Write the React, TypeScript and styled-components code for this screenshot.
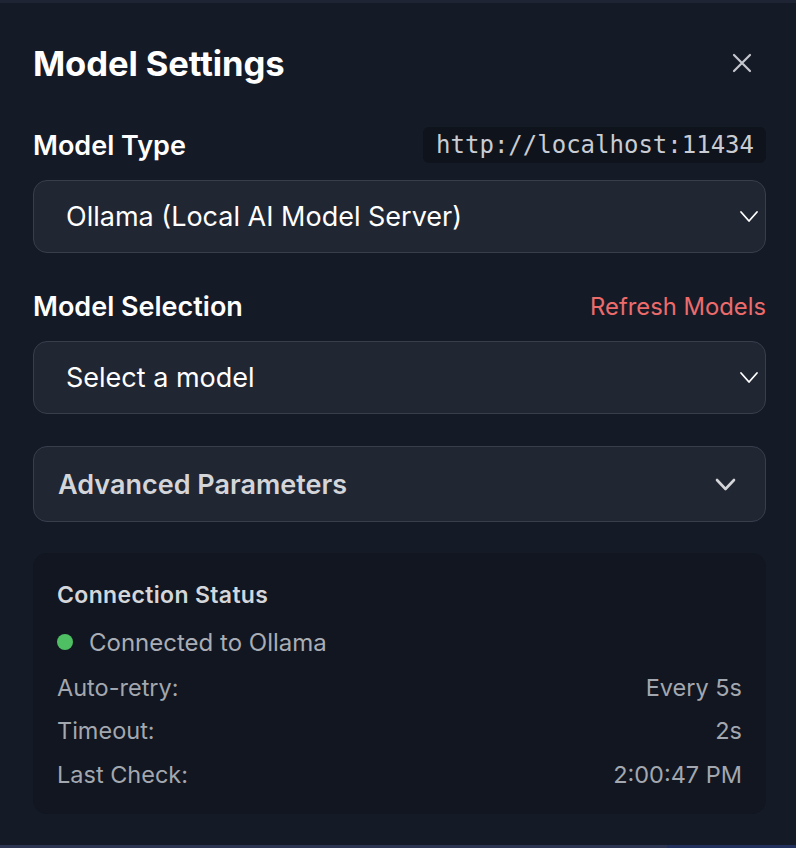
import React from "react";
import styled, { createGlobalStyle } from "styled-components";

const Global = createGlobalStyle`
  html, body { margin: 0; padding: 0; background: #151a27; }
  body { font-family: Inter, "Noto Sans", sans-serif; -webkit-font-smoothing: antialiased; }
  * { box-sizing: border-box; }
`;

const Page = styled.div`
  width: 796px;
  height: 848px;
  display: flex;
  flex-direction: column;
  background: #151a27;
  overflow: hidden;
`;

const TopStrip = styled.div`
  height: 3px;
  background: #1e2434;
  flex-shrink: 0;
`;

const Panel = styled.div`
  flex: 1;
  display: flex;
  flex-direction: column;
  padding: 0 30px 0 33px;
`;

const Header = styled.div`
  height: 126px;
  display: flex;
  align-items: center;
  justify-content: space-between;
  margin-top: -3px;
`;

const Title = styled.h1`
  margin: 0;
  font-size: 34.6px;
  font-weight: 700;
  color: #ffffff;
  letter-spacing: -0.1px;
`;

const CloseButton = styled.button`
  background: none;
  border: none;
  padding: 0;
  margin-right: 14px;
  width: 20px;
  height: 20px;
  display: flex;
  align-items: center;
  justify-content: center;
  color: #c4c7cd;
`;

const LabelRow = styled.div<{ $mt: number }>`
  margin-top: ${(p) => p.$mt}px;
  display: flex;
  align-items: center;
  justify-content: space-between;
  height: 38px;
`;

const Label = styled.span`
  font-size: 27px;
  font-weight: 600;
  color: #ffffff;
`;

const Code = styled.code`
  font-family: "DejaVu Sans Mono", "Liberation Mono", monospace;
  font-size: 24px;
  color: #c9ccd2;
  background: #0f131b;
  border-radius: 6px;
  padding: 0 12px 0 13px;
  height: 36px;
  display: flex;
  align-items: center;
`;

const Select = styled.div`
  margin-top: 16px;
  height: 73px;
  border: 1.5px solid #383e4c;
  border-radius: 14px;
  background: #212633;
  display: flex;
  align-items: center;
  justify-content: space-between;
  padding: 0 6px 0 32px;
  color: #ffffff;
  font-size: 27px;
`;

const RefreshLink = styled.span`
  font-size: 23.8px;
  color: #ec6b6b;
`;

const Accordion = styled.div`
  margin-top: 32px;
  height: 76px;
  border: 1.5px solid #383e4c;
  border-radius: 14px;
  background: #212633;
  display: flex;
  align-items: center;
  justify-content: space-between;
  padding: 0 29px 0 24px;
  color: #d3d5d9;
  font-size: 27px;
  font-weight: 600;
`;

const StatusBox = styled.div`
  margin-top: 31px;
  height: 261px;
  border-radius: 14px;
  background: #111620;
  padding: 28px 24px 0 24px;
  display: flex;
  flex-direction: column;
`;

const StatusTitle = styled.div`
  font-size: 23px;
  font-weight: 600;
  letter-spacing: 0.35px;
  color: #d4d6da;
  height: 28px;
  line-height: 28px;
`;

const Connected = styled.div`
  margin-top: 19px;
  display: flex;
  align-items: center;
  gap: 16px;
  font-size: 24px;
  color: #a9adb5;
  height: 28px;
`;

const Dot = styled.span`
  width: 16px;
  height: 16px;
  border-radius: 50%;
  background: #4fbf63;
`;

const InfoRow = styled.div<{ $mt: number }>`
  margin-top: ${(p) => p.$mt}px;
  display: flex;
  justify-content: space-between;
  align-items: center;
  height: 28px;
  font-size: 23.5px;
  color: #a3a7af;
`;

const BottomStrip = styled.div`
  height: 3px;
  display: flex;
  flex-shrink: 0;
`;

const StripPart = styled.div<{ $w: string; $c: string }>`
  width: ${(p) => p.$w};
  background: ${(p) => p.$c};
`;

const Chevron = ({ w, h, sw, color }: { w: number; h: number; sw: number; color: string }) => (
  <svg width={w + 4} height={h + 4} viewBox={`-2 -2 ${w + 4} ${h + 4}`} fill="none">
    <polyline
      points={`0,0 ${w / 2},${h} ${w},0`}
      stroke={color}
      strokeWidth={sw}
      strokeLinecap="round"
      strokeLinejoin="round"
    />
  </svg>
);

export default function App() {
  return (
    <Page>
      <Global />
      <TopStrip />
      <Panel>
        <Header>
          <Title>Model Settings</Title>
          <CloseButton aria-label="Close">
            <svg width="20" height="20" viewBox="0 0 20 20" fill="none">
              <path d="M2 2L18 18M18 2L2 18" stroke="currentColor" strokeWidth="2.2" strokeLinecap="round" />
            </svg>
          </CloseButton>
        </Header>
        <LabelRow $mt={0}>
          <Label>Model Type</Label>
          <Code>http://localhost:11434</Code>
        </LabelRow>
        <Select>
          <span>Ollama (Local AI Model Server)</span>
          <Chevron w={16} h={9} sw={1.8} color="#ffffff" />
        </Select>
        <LabelRow $mt={34}>
          <Label>Model Selection</Label>
          <RefreshLink>Refresh Models</RefreshLink>
        </LabelRow>
        <Select>
          <span>Select a model</span>
          <Chevron w={16} h={9} sw={1.8} color="#ffffff" />
        </Select>
        <Accordion>
          <span>Advanced Parameters</span>
          <Chevron w={17} h={9} sw={2.6} color="#d3d5d9" />
        </Accordion>
        <StatusBox>
          <StatusTitle>Connection Status</StatusTitle>
          <Connected>
            <Dot />
            <span>Connected to Ollama</span>
          </Connected>
          <InfoRow $mt={17}>
            <span>Auto-retry:</span>
            <span>Every 5s</span>
          </InfoRow>
          <InfoRow $mt={15}>
            <span>Timeout:</span>
            <span>2s</span>
          </InfoRow>
          <InfoRow $mt={16}>
            <span>Last Check:</span>
            <span>2:00:47 PM</span>
          </InfoRow>
        </StatusBox>
      </Panel>
      <BottomStrip>
        <StripPart $w="667px" $c="#2c3551" />
        <StripPart $w="129px" $c="#21305d" />
      </BottomStrip>
    </Page>
  );
}
